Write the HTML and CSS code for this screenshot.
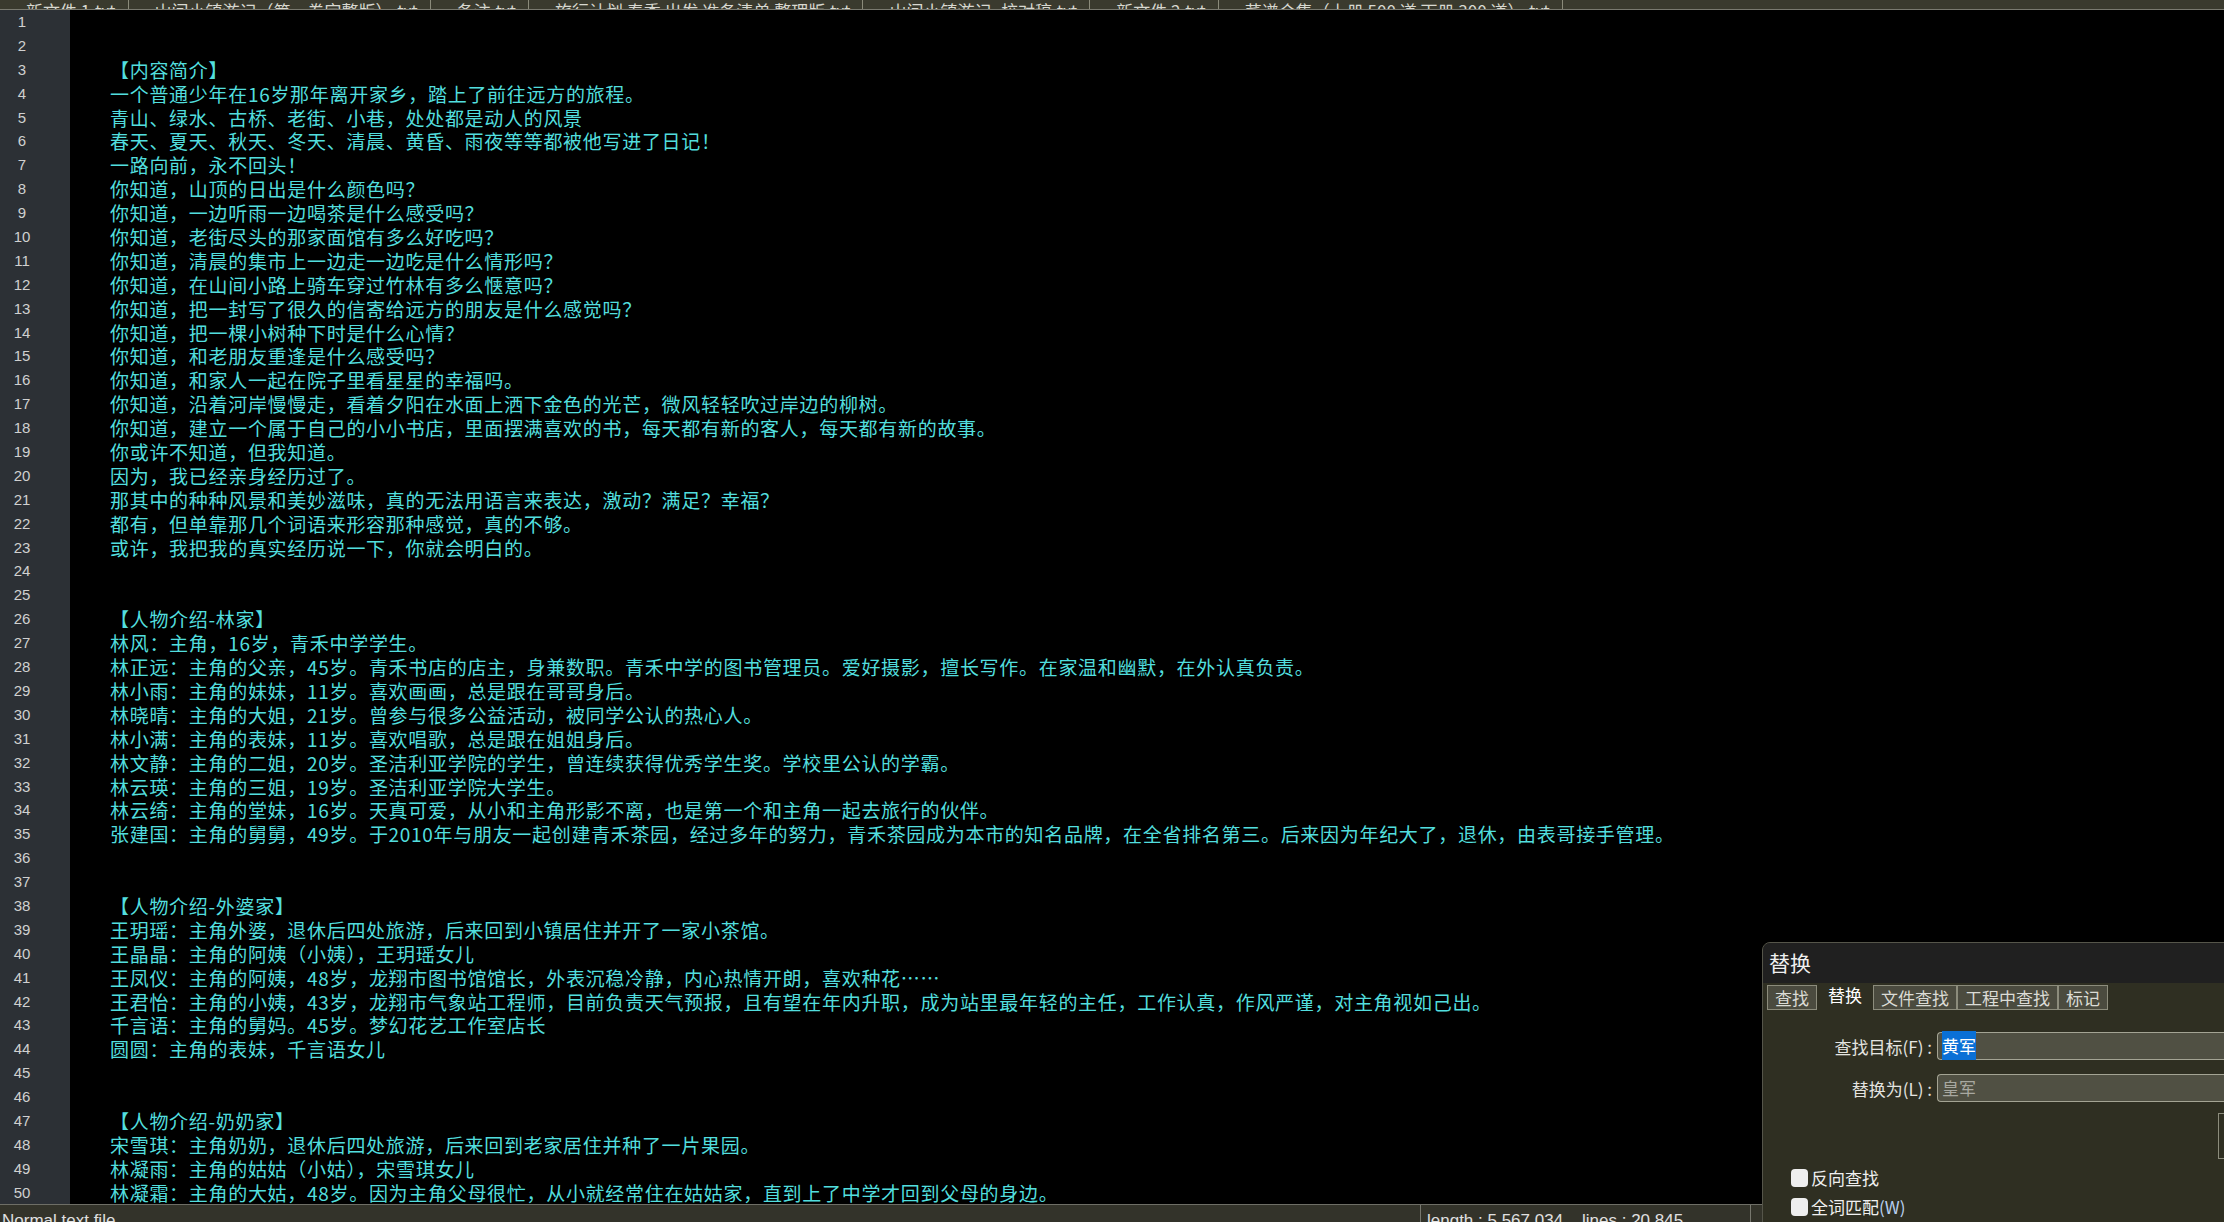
FILE: index.html
```html
<!DOCTYPE html>
<html lang="zh-CN">
<head>
    <meta charset="UTF-8">
    <title>记事本</title>
    <link rel="stylesheet" href="styles.css">
</head>
<body>
    <div class="app">
        <div class="tabbar">
            <span class="tab">新文件 1.txt</span>
            <span class="tab">山间小镇游记（第一卷完整版）.txt</span>
            <span class="tab">备注.txt</span>
            <span class="tab">旅行计划 春季 出发 准备清单 整理版.txt</span>
            <span class="tab">山间小镇游记_校对稿.txt</span>
            <span class="tab">新文件 2.txt</span>
            <span class="tab">菜谱合集（上册 500 道 下册 300 道）.txt</span>
        </div>

        <div class="editor">
            <div class="gutter" id="gutter"></div>
            <div class="text">
                <div class="ln"></div>
                <div class="ln"></div>
                <div class="ln">【内容简介】</div>
                <div class="ln">一个普通少年在16岁那年离开家乡，踏上了前往远方的旅程。</div>
                <div class="ln">青山、绿水、古桥、老街、小巷，处处都是动人的风景</div>
                <div class="ln">春天、夏天、秋天、冬天、清晨、黄昏、雨夜等等都被他写进了日记！</div>
                <div class="ln">一路向前，永不回头！</div>
                <div class="ln">你知道，山顶的日出是什么颜色吗？</div>
                <div class="ln">你知道，一边听雨一边喝茶是什么感受吗？</div>
                <div class="ln">你知道，老街尽头的那家面馆有多么好吃吗？</div>
                <div class="ln">你知道，清晨的集市上一边走一边吃是什么情形吗？</div>
                <div class="ln">你知道，在山间小路上骑车穿过竹林有多么惬意吗？</div>
                <div class="ln">你知道，把一封写了很久的信寄给远方的朋友是什么感觉吗？</div>
                <div class="ln">你知道，把一棵小树种下时是什么心情？</div>
                <div class="ln">你知道，和老朋友重逢是什么感受吗？</div>
                <div class="ln">你知道，和家人一起在院子里看星星的幸福吗。</div>
                <div class="ln">你知道，沿着河岸慢慢走，看着夕阳在水面上洒下金色的光芒，微风轻轻吹过岸边的柳树。</div>
                <div class="ln">你知道，建立一个属于自己的小小书店，里面摆满喜欢的书，每天都有新的客人，每天都有新的故事。</div>
                <div class="ln">你或许不知道，但我知道。</div>
                <div class="ln">因为，我已经亲身经历过了。</div>
                <div class="ln">那其中的种种风景和美妙滋味，真的无法用语言来表达，激动？满足？幸福？</div>
                <div class="ln">都有，但单靠那几个词语来形容那种感觉，真的不够。</div>
                <div class="ln">或许，我把我的真实经历说一下，你就会明白的。</div>
                <div class="ln"></div>
                <div class="ln"></div>
                <div class="ln">【人物介绍-林家】</div>
                <div class="ln">林风：主角，16岁，青禾中学学生。</div>
                <div class="ln">林正远：主角的父亲，45岁。青禾书店的店主，身兼数职。青禾中学的图书管理员。爱好摄影，擅长写作。在家温和幽默，在外认真负责。</div>
                <div class="ln">林小雨：主角的妹妹，11岁。喜欢画画，总是跟在哥哥身后。</div>
                <div class="ln">林晓晴：主角的大姐，21岁。曾参与很多公益活动，被同学公认的热心人。</div>
                <div class="ln">林小满：主角的表妹，11岁。喜欢唱歌，总是跟在姐姐身后。</div>
                <div class="ln">林文静：主角的二姐，20岁。圣洁利亚学院的学生，曾连续获得优秀学生奖。学校里公认的学霸。</div>
                <div class="ln">林云瑛：主角的三姐，19岁。圣洁利亚学院大学生。</div>
                <div class="ln">林云绮：主角的堂妹，16岁。天真可爱，从小和主角形影不离，也是第一个和主角一起去旅行的伙伴。</div>
                <div class="ln">张建国：主角的舅舅，49岁。于2010年与朋友一起创建青禾茶园，经过多年的努力，青禾茶园成为本市的知名品牌，在全省排名第三。后来因为年纪大了，退休，由表哥接手管理。</div>
                <div class="ln"></div>
                <div class="ln"></div>
                <div class="ln">【人物介绍-外婆家】</div>
                <div class="ln">王玥瑶：主角外婆，退休后四处旅游，后来回到小镇居住并开了一家小茶馆。</div>
                <div class="ln">王晶晶：主角的阿姨（小姨），王玥瑶女儿</div>
                <div class="ln">王凤仪：主角的阿姨，48岁，龙翔市图书馆馆长，外表沉稳冷静，内心热情开朗，喜欢种花……</div>
                <div class="ln">王君怡：主角的小姨，43岁，龙翔市气象站工程师，目前负责天气预报，且有望在年内升职，成为站里最年轻的主任，工作认真，作风严谨，对主角视如己出。</div>
                <div class="ln">千言语：主角的舅妈。45岁。梦幻花艺工作室店长</div>
                <div class="ln">圆圆：主角的表妹，千言语女儿</div>
                <div class="ln"></div>
                <div class="ln"></div>
                <div class="ln">【人物介绍-奶奶家】</div>
                <div class="ln">宋雪琪：主角奶奶，退休后四处旅游，后来回到老家居住并种了一片果园。</div>
                <div class="ln">林凝雨：主角的姑姑（小姑），宋雪琪女儿</div>
                <div class="ln">林凝霜：主角的大姑，48岁。因为主角父母很忙，从小就经常住在姑姑家，直到上了中学才回到父母的身边。</div>
            </div>
        </div>

        <div class="statusbar">
            <span class="st-left">Normal text file</span>
            <span class="st-sep"></span>
            <span class="st-mid">length : 5,567,034&nbsp;&nbsp;&nbsp;&nbsp;lines : 20,845</span>
            <span class="st-sep"></span>
        </div>

        <div class="dialog">
            <div class="dlg-title">替换</div>
            <div class="dlg-body">
                <div class="dlg-tabs">
                    <span class="dtab">查找</span>
                    <span class="dtab active">替换</span>
                    <span class="dtab">文件查找</span>
                    <span class="dtab">工程中查找</span>
                    <span class="dtab">标记</span>
                </div>
                <div class="dlg-row row-find">
                    <span class="dlg-label">查找目标(F) :</span>
                    <span class="dlg-input"><span class="sel">黄军</span></span>
                </div>
                <div class="dlg-row row-repl">
                    <span class="dlg-label">替换为(L) :</span>
                    <span class="dlg-input dim">皇军</span>
                </div>
                <div class="dlg-btn-row"><span class="dlg-btn"></span></div>
                <label class="chk"><span class="box"></span>反向查找</label>
                <label class="chk"><span class="box"></span>全词匹配<span class="key">(W)</span></label>
            </div>
        </div>
    </div>

    <script>
        let gutter = document.getElementById('gutter');
        let count = document.querySelectorAll('.ln').length;
        for (let i = 1; i <= count; i++) {
            let d = document.createElement('div');
            d.className = 'num';
            d.textContent = i;
            gutter.appendChild(d);
        }
    </script>
</body>
</html>
```

FILE: styles.css
```css
html,
body {
    margin: 0;
    padding: 0;
    height: 100%;
    overflow: hidden;
    background-color: #000000;
}

.app {
    position: relative;
    width: 2224px;
    height: 1222px;
    display: flex;
    flex-direction: column;
    font-family: "Noto Sans CJK SC", "Liberation Sans", sans-serif;
}

/* 上面只露出一点的标签栏 */
.tabbar {
    height: 9px;
    overflow: hidden;
    display: flex;
    align-items: flex-end;
    background-color: #3a3a2e;
    border-bottom: 1px solid #7a7a70;
}

.tab {
    display: block;
    padding: 0 12px 0 26px;
    margin-bottom: -14px;
    font-size: 17px;
    line-height: 24px;
    color: #d8d8d0;
    border-right: 1px solid #8a8a7a;
    white-space: nowrap;
}

.editor {
    flex: 1;
    display: flex;
    min-height: 0;
    overflow: hidden;
}

.gutter {
    width: 70px;
    flex-shrink: 0;
    background-color: #2c3035;
}

.num {
    width: 44px;
    height: 23.9px;
    line-height: 23.9px;
    text-align: center;
    font-family: "Liberation Sans", sans-serif;
    font-size: 15px;
    color: #d0d0d0;
}

.text {
    flex: 1;
    padding-left: 40px;
}

.ln {
    height: 23.9px;
    line-height: 23.9px;
    font-size: 19px;
    letter-spacing: 0.7px;
    color: #52dede;
    white-space: nowrap;
}

.statusbar {
    height: 17px;
    flex-shrink: 0;
    display: flex;
    align-items: flex-start;
    overflow: hidden;
    background-color: #33332a;
    border-top: 1px solid #6e6e66;
    font-family: "Liberation Sans", sans-serif;
    font-size: 17px;
    color: #e0e0e0;
}

.st-left {
    width: 1418px;
    padding-left: 2px;
    line-height: 32px;
}

.st-sep {
    width: 1px;
    height: 17px;
    background-color: #77776e;
}

.st-mid {
    width: 323px;
    padding-left: 6px;
    line-height: 32px;
}

/* 替换对话框 */
.dialog {
    position: absolute;
    left: 1762px;
    top: 942px;
    width: 470px;
    height: 290px;
    background-color: #2f2f22;
    border: 1px solid #55554a;
    border-radius: 8px 0 0 0;
    overflow: hidden;
    color: #e4e4e0;
}

.dlg-title {
    height: 40px;
    line-height: 38px;
    padding-left: 6px;
    font-size: 21px;
    background-color: #202020;
    color: #f0f0f0;
}

.dlg-body {
    padding: 2px 0 0 4px;
}

.dlg-tabs {
    display: flex;
    height: 25px;
}

.dtab {
    padding: 0 7px;
    line-height: 23px;
    font-size: 17px;
    color: #dcdcd6;
    background-color: #4b4b3f;
    border: 1px solid #8c8c7c;
}

.dtab.active {
    background-color: transparent;
    border-color: transparent;
    margin: -3px 3px 0;
    padding: 0 7px;
    color: #ffffff;
}

.dlg-row {
    display: flex;
    align-items: center;
    height: 30px;
}

.row-find {
    margin-top: 21px;
}

.row-repl {
    margin-top: 12px;
}

.dlg-label {
    width: 165px;
    text-align: right;
    font-size: 17px;
    padding-right: 3px;
}

.dlg-input {
    flex: 1;
    height: 26px;
    line-height: 26px;
    margin-left: 2px;
    padding-left: 4px;
    font-size: 17px;
    background-color: #505043;
    border: 1px solid #a4a494;
    border-right: none;
    border-radius: 4px 0 0 4px;
}

.dlg-input.dim {
    color: #a8a8a0;
}

.sel {
    background-color: #0a70d6;
    color: #ffffff;
    padding: 2px 0;
}

.dlg-btn-row {
    height: 50px;
    display: flex;
    justify-content: flex-end;
    margin-top: 10px;
}

.dlg-btn {
    width: 14px;
    height: 44px;
    border: 1px solid #8c8c7c;
    border-right: none;
}

.chk {
    display: flex;
    align-items: center;
    height: 29px;
    padding-left: 24px;
    font-size: 17px;
    color: #f0f0f0;
}

.box {
    width: 17px;
    height: 18px;
    margin-right: 3px;
    background-color: #eeeeee;
    border-radius: 4px;
}

.key {
    color: #b8d0f0;
}
```
